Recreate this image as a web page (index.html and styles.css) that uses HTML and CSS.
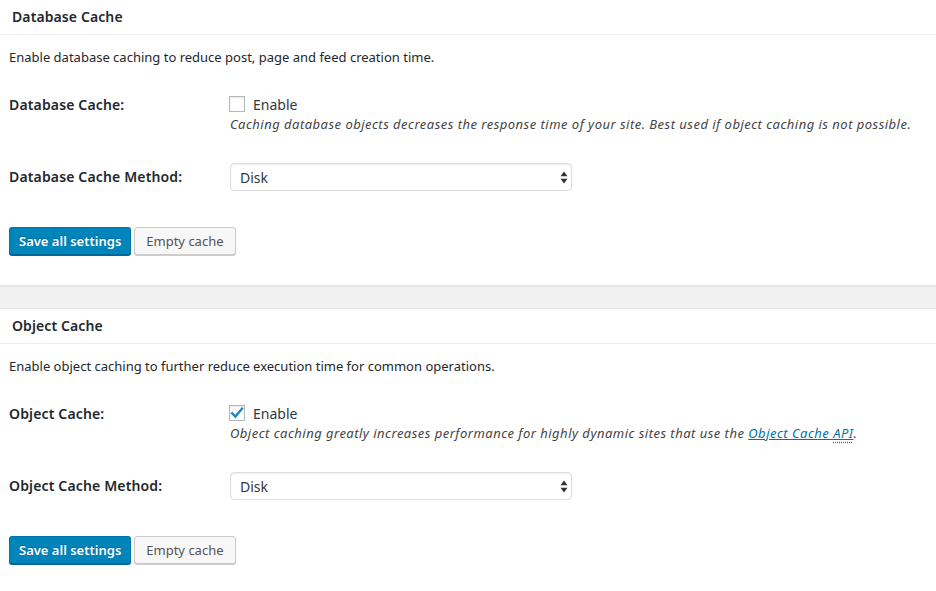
FILE: index.html
```html
<!DOCTYPE html>
<html lang="en">
<head>
<meta charset="utf-8">
<title>Cache settings</title>
<link rel="stylesheet" href="styles.css">
</head>
<body>
<div class="page">
  <section class="postbox first">
    <h3 class="hndle">Database Cache</h3>
    <div class="inside">
      <p class="intro">Enable database caching to reduce post, page and feed creation time.</p>
      <div class="row row-check">
        <div class="label">Database Cache:</div>
        <div class="field">
          <label class="check"><span class="box"></span><span class="check-text">Enable</span></label>
          <p class="desc">Caching database objects decreases the response time of your site. Best used if object caching is not possible.</p>
        </div>
      </div>
      <div class="row row-select">
        <div class="label">Database Cache Method:</div>
        <div class="field">
          <div class="select-wrap">
            <select class="select"><option>Disk</option></select>
            <svg class="arrows" width="8" height="13" viewBox="0 0 8 13"><path d="M4 0.5 L7.5 5.2 H0.5 Z M0.5 7.8 H7.5 L4 12.5 Z" fill="#333"/></svg>
          </div>
        </div>
      </div>
      <div class="actions">
        <button class="btn btn-primary">Save all settings</button>
        <button class="btn btn-secondary">Empty cache</button>
      </div>
    </div>
  </section>
  <section class="postbox">
    <h3 class="hndle">Object Cache</h3>
    <div class="inside">
      <p class="intro">Enable object caching to further reduce execution time for common operations.</p>
      <div class="row row-check">
        <div class="label">Object Cache:</div>
        <div class="field">
          <label class="check"><span class="box"><svg width="14" height="14" viewBox="0 0 14 14"><path d="M2.2 7.2 L5.4 10.6 L12 2.6" fill="none" stroke="#1e8cbe" stroke-width="2.4" stroke-linecap="square" stroke-linejoin="miter"/></svg></span><span class="check-text">Enable</span></label>
          <p class="desc">Object caching greatly increases performance for highly dynamic sites that use the <a href="#" class="link">Object Cache <abbr>API</abbr></a>.</p>
        </div>
      </div>
      <div class="row row-select">
        <div class="label">Object Cache Method:</div>
        <div class="field">
          <div class="select-wrap">
            <select class="select"><option>Disk</option></select>
            <svg class="arrows" width="8" height="13" viewBox="0 0 8 13"><path d="M4 0.5 L7.5 5.2 H0.5 Z M0.5 7.8 H7.5 L4 12.5 Z" fill="#333"/></svg>
          </div>
        </div>
      </div>
      <div class="actions">
        <button class="btn btn-primary">Save all settings</button>
        <button class="btn btn-secondary">Empty cache</button>
      </div>
    </div>
  </section>
</div>
</body>
</html>
```
FILE: styles.css
```css
html, body {
  margin: 0;
  padding: 0;
}
body {
  background: #f1f1f1;
  color: #23282d;
  font-family: "Noto Sans", "Liberation Sans", sans-serif;
  font-size: 13px;
}
.page {
  display: flex;
  flex-direction: column;
  gap: 22px;
}
.postbox {
  background: #fff;
  border-top: 1px solid #e5e5e5;
  border-bottom: 1px solid #e5e5e5;
  box-shadow: 0 1px 1px rgba(0,0,0,.04);
}
.postbox.first {
  margin-top: -1px;
}
.hndle {
  margin: 0;
  padding: 7px 12px;
  font-size: 14px;
  line-height: 20px;
  font-weight: 600;
  letter-spacing: 0.1px;
  border-bottom: 1px solid #eee;
}
.inside {
  padding: 0 9px 30px;
}
.intro {
  margin: 12px 0 0;
  line-height: 20px;
}
.row {
  display: grid;
  grid-template-columns: 221px 1fr;
}
.row-check {
  margin-top: 28px;
}
.row-select {
  margin-top: 30px;
  align-items: center;
}
.label {
  font-size: 14px;
  font-weight: 600;
  line-height: 20px;
  letter-spacing: 0.15px;
}
.check {
  display: flex;
  align-items: center;
  gap: 8px;
  height: 20px;
  font-size: 14px;
}
.box {
  width: 14px;
  height: 14px;
  border: 1px solid #b4b9be;
  background: #fff;
  box-shadow: inset 0 1px 2px rgba(0,0,0,.1);
  display: flex;
  align-items: center;
  justify-content: center;
  margin-left: -1px;
  margin-top: -2px;
}
.box svg {
  display: block;
}
.check-text {
  line-height: 20px;
  color: #32373c;
}
.desc {
  margin: 0;
  font-style: italic;
  line-height: 18px;
  letter-spacing: 0.48px;
  color: #444;
}
.link {
  color: #0073aa;
  text-decoration: underline;
}
.link abbr {
  text-decoration: underline dotted #555;
  text-underline-offset: 4px;
}
.select-wrap {
  position: relative;
  width: 342px;
}
.select {
  appearance: none;
  -webkit-appearance: none;
  width: 342px;
  height: 28px;
  margin: 0;
  padding: 0 9px;
  border: 1px solid #ddd;
  border-radius: 4px;
  background: #fff;
  box-shadow: inset 0 1px 2px rgba(0,0,0,.07);
  font-family: inherit;
  font-size: 14px;
  color: #32373c;
}
.arrows {
  position: absolute;
  right: 4px;
  top: 8px;
}
.actions {
  margin-top: 36px;
  display: flex;
  gap: 3px;
}
.btn {
  height: 28px;
  margin: 0;
  border-radius: 3px;
  font-family: inherit;
  font-size: 13px;
  line-height: 26px;
  cursor: pointer;
}
.btn-primary {
  padding: 0 9px;
  background: #0085ba;
  border: 1px solid #0073aa;
  border-bottom-color: #006799;
  box-shadow: 0 1px 0 #006799;
  color: #fff;
  font-weight: 600;
  text-shadow: 0 -1px 1px #006799;
}
.btn-secondary {
  padding: 0 11px;
  background: #f7f7f7;
  border: 1px solid #ccc;
  box-shadow: 0 1px 0 #ccc;
  color: #555;
}
```
